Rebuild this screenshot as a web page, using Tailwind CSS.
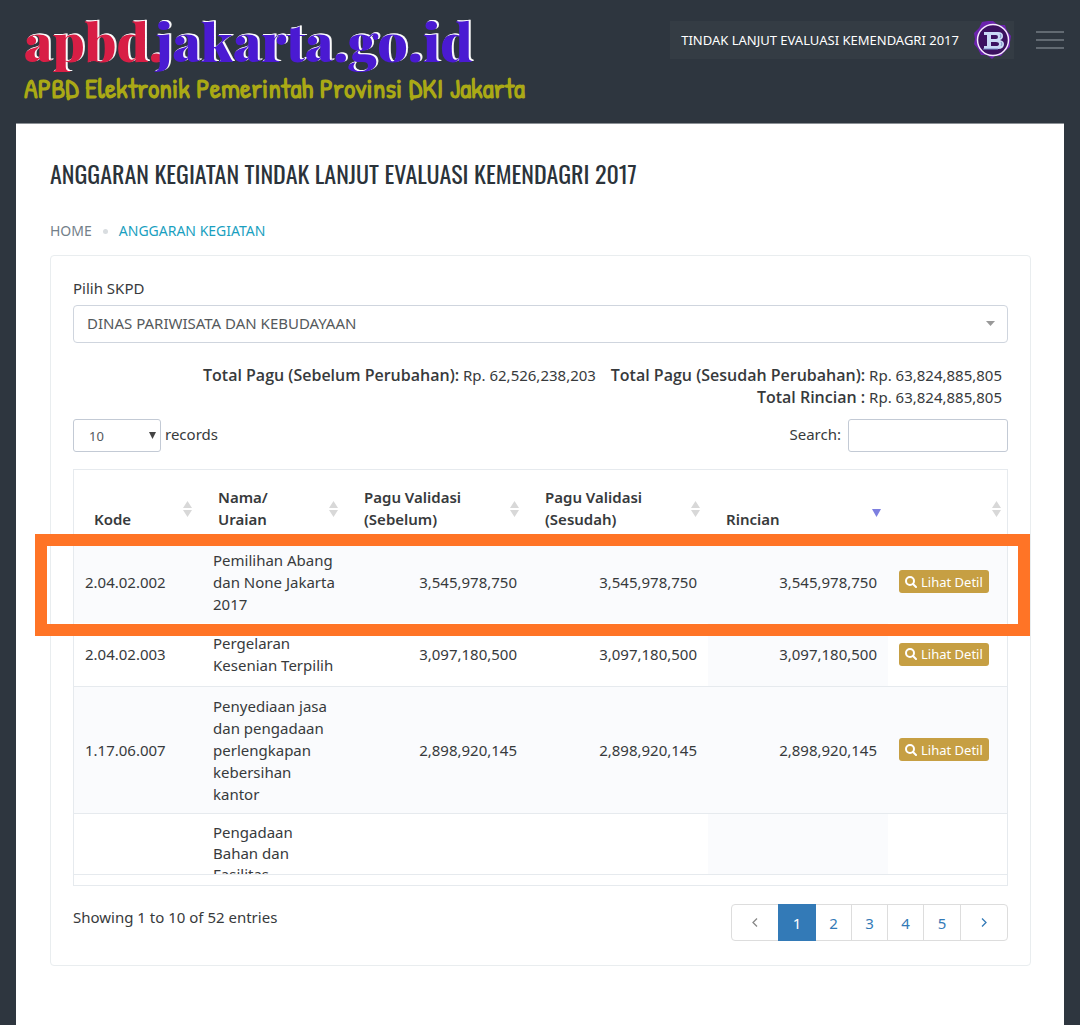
<!DOCTYPE html>
<html lang="id">
<head>
    <meta charset="UTF-8">
    <meta name="viewport" content="width=device-width, initial-scale=1.0">
    <title>APBD Jakarta</title>
    <script src="https://cdn.jsdelivr.net/npm/@tailwindcss/browser@4"></script>
</head>
<body class="min-h-screen flex flex-col bg-[#2e363f] font-['Noto_Sans','Open_Sans',sans-serif] text-[15px] leading-[22px] text-[#373a3c]">

    <!-- Header -->
    <header class="flex justify-between items-start h-[123px] pl-6 pr-4">
        <div class="pt-[11px] whitespace-nowrap">
            <div class="font-['Playfair_Display','Liberation_Serif',serif] font-black text-[53px] leading-[58px] text-[#4a1ad2] [text-shadow:1px_-1px_0_#fff,2px_-1px_0_#eee]"><span class="mr-[-8px] text-[#d81e45]">apbd.</span>jakarta.go.id</div>
            <div class="font-['Patrick_Hand','Oswald',sans-serif] font-bold text-[28px] leading-[38px] text-[#aaa915]">APBD Elektronik Pemerintah Provinsi DKI Jakarta</div>
        </div>
        <div class="flex items-start pt-[21px]">
            <div class="flex items-center h-[38px] pl-[11px] pr-[2px] bg-[#343c44] text-[13px] text-white">
                <span class="mr-[15px]">TINDAK LANJUT EVALUASI KEMENDAGRI 2017</span>
                <svg class="w-[38px] h-[38px]" viewBox="0 0 38 38">
                    <path d="M19 0l5 4 7 0 2 6 4 5-1 6 0 5-5 4-4 5-6 0-3 3-5-4-6 0-3-6-4-5 1-5-1-6 5-5 3-6 6-1z" fill="#6b22ad"/>
                    <circle cx="19" cy="19" r="15.5" fill="#3c1260" stroke="#f6eaff" stroke-width="1.5"/>
                    <path d="M10 11h14q5 0 5 4 0 3-3 4 4 1 4 4 0 5-6 5H10v-3h3V14h-3zM17 14v4h5q2 0 2-2t-2-2zM17 21v4h5q3 0 3-2t-3-2z" fill="#c9d9f5" fill-rule="evenodd"/>
                    <path d="M9 28h15M26 13q2 2 0 4M27 21q2 2 0 4" fill="none" stroke="#7890c8"/>
                </svg>
            </div>
            <button class="ml-[22px] mt-[10px] w-7 h-[18px] flex flex-col justify-between" aria-label="Menu">
                <span class="h-[2px] w-full bg-[#626a72]"></span>
                <span class="h-[2px] w-full bg-[#626a72]"></span>
                <span class="h-[2px] w-full bg-[#626a72]"></span>
            </button>
        </div>
    </header>

    <!-- Content -->
    <main class="flex-1 mx-4 pl-[34px] pr-[33px] pt-[30px] bg-white border-t border-[#8b9095]">
        <h1 class="font-['Oswald','Liberation_Sans_Narrow',sans-serif] text-[24px] leading-[38px] text-[#2b333a]">ANGGARAN KEGIATAN TINDAK LANJUT EVALUASI KEMENDAGRI 2017</h1>

        <nav class="flex items-center mt-7 text-[14px]">
            <a href="#" class="text-[#74808a]">HOME</a>
            <span class="w-[5px] h-[5px] mx-[11px] rounded-full bg-[#d9dde0]"></span>
            <a href="#" class="text-[#1a9fbf]">ANGGARAN KEGIATAN</a>
        </nav>

        <section class="mt-[13px] px-[22px] pt-[21px] pb-6 border border-[#e9edef] rounded">
            <label for="skpd" class="block">Pilih SKPD</label>
            <div class="relative mt-[6px]">
                <select id="skpd" class="appearance-none block w-full h-[38px] px-[13px] pb-[2px] border border-[#cfd5de] rounded text-[#55595c] bg-white">
                    <option>DINAS PARIWISATA DAN KEBUDAYAAN</option>
                </select>
                <svg class="absolute right-[13px] top-4 w-[9px] h-[5px]" viewBox="0 0 9 5"><path d="M0 0h9L4.500 5z" fill="#999"/></svg>
            </div>

            <div class="mt-[21px] pr-[6px] text-right">
                <p><strong class="font-['Open_Sans'] text-[16px] leading-[20px] font-semibold">Total Pagu (Sebelum Perubahan):</strong> Rp. 62,526,238,203 <strong class="ml-[11px] font-['Open_Sans'] text-[16px] leading-[20px] font-semibold">Total Pagu (Sesudah Perubahan):</strong> Rp. 63,824,885,805</p>
                <p><strong class="font-['Open_Sans'] text-[16px] leading-[20px] font-semibold">Total Rincian :</strong> Rp. 63,824,885,805</p>
            </div>

            <div class="flex justify-between mt-[11px]">
                <label class="flex items-center gap-1">
                    <select class="appearance-none block w-[88px] h-[33px] pl-[15px] border border-[#c3cad5] rounded-[3px] text-[13px] text-[#55595c] bg-white">
                        <option>10</option>
                    </select>
                    <svg class="-ml-4 mr-[5px] w-[7px] h-[7px]" viewBox="0 0 7 7"><path d="M0 0h7L3.500 7z" fill="#444"/></svg>
                    <span class="pb-1">records</span>
                </label>
                <label class="flex items-center gap-[7px]">
                    <span class="pb-1">Search:</span>
                    <input type="text" class="w-[160px] h-[33px] px-2 border border-[#c3cad5] rounded-[3px]">
                </label>
            </div>

            <!-- Tabel anggaran -->
            <div class="relative mt-[17px] border border-[#e6eaee]">
                <table class="table-fixed w-full h-[70px] text-left">
                    <colgroup>
                        <col class="w-[124px]"><col class="w-[146px]"><col class="w-[181px]"><col class="w-[181px]"><col class="w-[181px]"><col>
                    </colgroup>
                    <thead>
                        <tr class="align-bottom">
                            <th class="relative pl-5 pb-[10px] font-semibold">Kode<svg class="absolute right-[6px] bottom-[23px] w-[9px] h-4" viewBox="0 0 9 16"><path d="M0 7L4.500 0 9 7zM0 9h9L4.500 16z" fill="#d8d8d8"/></svg></th>
                            <th class="relative pl-5 pb-[10px] font-semibold">Nama/<br>Uraian<svg class="absolute right-[6px] bottom-[23px] w-[9px] h-4" viewBox="0 0 9 16"><path d="M0 7L4.500 0 9 7zM0 9h9L4.500 16z" fill="#d8d8d8"/></svg></th>
                            <th class="relative pl-5 pb-[10px] font-semibold">Pagu Validasi<br>(Sebelum)<svg class="absolute right-[6px] bottom-[23px] w-[9px] h-4" viewBox="0 0 9 16"><path d="M0 7L4.500 0 9 7zM0 9h9L4.500 16z" fill="#d8d8d8"/></svg></th>
                            <th class="relative pl-5 pb-[10px] font-semibold">Pagu Validasi<br>(Sesudah)<svg class="absolute right-[6px] bottom-[23px] w-[9px] h-4" viewBox="0 0 9 16"><path d="M0 7L4.500 0 9 7zM0 9h9L4.500 16z" fill="#d8d8d8"/></svg></th>
                            <th class="relative pl-5 pb-[10px] font-semibold">Rincian<svg class="absolute right-[6px] bottom-[23px] w-[9px] h-[8px]" viewBox="0 0 9 8"><path d="M0 0h9L4.500 8z" fill="#7d7fe0"/></svg></th>
                            <th class="relative"><svg class="absolute right-[6px] bottom-[23px] w-[9px] h-4" viewBox="0 0 9 16"><path d="M0 7L4.500 0 9 7zM0 9h9L4.500 16z" fill="#d8d8d8"/></svg></th>
                        </tr>
                    </thead>
                </table>

                <div class="h-[335px] overflow-hidden border-b border-[#e6eaee]">
                    <table class="table-fixed w-full">
                        <colgroup>
                            <col class="w-[129px]"><col class="w-[145px]"><col class="w-[180px]"><col class="w-[180px]"><col class="w-[180px]"><col>
                        </colgroup>
                        <tbody>
                            <tr class="h-[83px] bg-[#fafbfd]">
                                <td class="pl-[11px]">2.04.02.002</td>
                                <td class="pl-[10px]">Pemilihan Abang<br>dan None Jakarta<br>2017</td>
                                <td class="pr-[11px] text-right">3,545,978,750</td>
                                <td class="pr-[11px] text-right">3,545,978,750</td>
                                <td class="pr-[11px] text-right">3,545,978,750</td>
                                <td class="pl-[11px]"><button class="flex items-center gap-1 h-[23px] px-[6px] rounded-[3px] bg-[#c69f43] text-[13px] text-white"><svg class="w-3 h-3" viewBox="0 0 12 12"><circle cx="5" cy="5" r="4" fill="none" stroke="#fff" stroke-width="2"/><path d="M8 8l3 3" stroke="#fff" stroke-width="2" stroke-linecap="round"/></svg>Lihat Detil</button></td>
                            </tr>
                            <tr class="h-[63px] border-b border-[#e6eaee]">
                                <td class="pl-[11px]">2.04.02.003</td>
                                <td class="pl-[10px]">Pergelaran<br>Kesenian Terpilih</td>
                                <td class="pr-[11px] text-right">3,097,180,500</td>
                                <td class="pr-[11px] text-right">3,097,180,500</td>
                                <td class="pr-[11px] text-right bg-[#fafbfd]">3,097,180,500</td>
                                <td class="pl-[11px]"><button class="flex items-center gap-1 h-[23px] px-[6px] rounded-[3px] bg-[#c69f43] text-[13px] text-white"><svg class="w-3 h-3" viewBox="0 0 12 12"><circle cx="5" cy="5" r="4" fill="none" stroke="#fff" stroke-width="2"/><path d="M8 8l3 3" stroke="#fff" stroke-width="2" stroke-linecap="round"/></svg>Lihat Detil</button></td>
                            </tr>
                            <tr class="h-[127px] border-b border-[#e6eaee] bg-[#fafbfd]">
                                <td class="pl-[11px]">1.17.06.007</td>
                                <td class="pl-[10px]">Penyediaan jasa<br>dan pengadaan<br>perlengkapan<br>kebersihan<br>kantor</td>
                                <td class="pr-[11px] text-right">2,898,920,145</td>
                                <td class="pr-[11px] text-right">2,898,920,145</td>
                                <td class="pr-[11px] text-right">2,898,920,145</td>
                                <td class="pl-[11px]"><button class="flex items-center gap-1 h-[23px] px-[6px] rounded-[3px] bg-[#c69f43] text-[13px] text-white"><svg class="w-3 h-3" viewBox="0 0 12 12"><circle cx="5" cy="5" r="4" fill="none" stroke="#fff" stroke-width="2"/><path d="M8 8l3 3" stroke="#fff" stroke-width="2" stroke-linecap="round"/></svg>Lihat Detil</button></td>
                            </tr>
                            <tr class="align-top leading-[21px]">
                                <td></td>
                                <td class="pl-[10px] pt-2">Pengadaan<br>Bahan dan<br>Fasilitas</td>
                                <td></td>
                                <td></td>
                                <td class="bg-[#fafbfd]"></td>
                                <td></td>
                            </tr>
                        </tbody>
                    </table>
                </div>
                <div class="h-[10px]"></div>

                <!-- Sorotan baris pertama -->
                <div class="absolute -left-[39px] -right-[23px] top-16 h-[102px] border-[12px] border-[#ff7426] pointer-events-none"></div>
            </div>

            <div class="flex justify-between mt-[18px]">
                <p class="pt-[2px]">Showing 1 to 10 of 52 entries</p>
                <nav class="flex h-[37px] border border-[#ddd] rounded text-[#337ab7]">
                    <a href="#" class="w-[46px] flex items-center justify-center text-[#888]" aria-label="Sebelumnya"><svg class="w-[6px] h-[9px]" viewBox="0 0 6 9"><path d="M5 .5l-4 4 4 4" fill="none" stroke="currentColor" stroke-width="1.300"/></svg></a>
                    <a href="#" class="-my-px w-[38px] flex items-center justify-center bg-[#337ab7] text-white">1</a>
                    <a href="#" class="w-[35px] flex items-center justify-center">2</a>
                    <a href="#" class="w-9 flex items-center justify-center border-l border-[#ddd]">3</a>
                    <a href="#" class="w-9 flex items-center justify-center border-l border-[#ddd]">4</a>
                    <a href="#" class="w-[37px] flex items-center justify-center border-l border-[#ddd]">5</a>
                    <a href="#" class="w-[47px] flex items-center justify-center border-l border-[#ddd]" aria-label="Berikutnya"><svg class="w-[6px] h-[9px]" viewBox="0 0 6 9"><path d="M1 .5l4 4-4 4" fill="none" stroke="currentColor" stroke-width="1.300"/></svg></a>
                </nav>
            </div>
        </section>
    </main>
</body>
</html>
